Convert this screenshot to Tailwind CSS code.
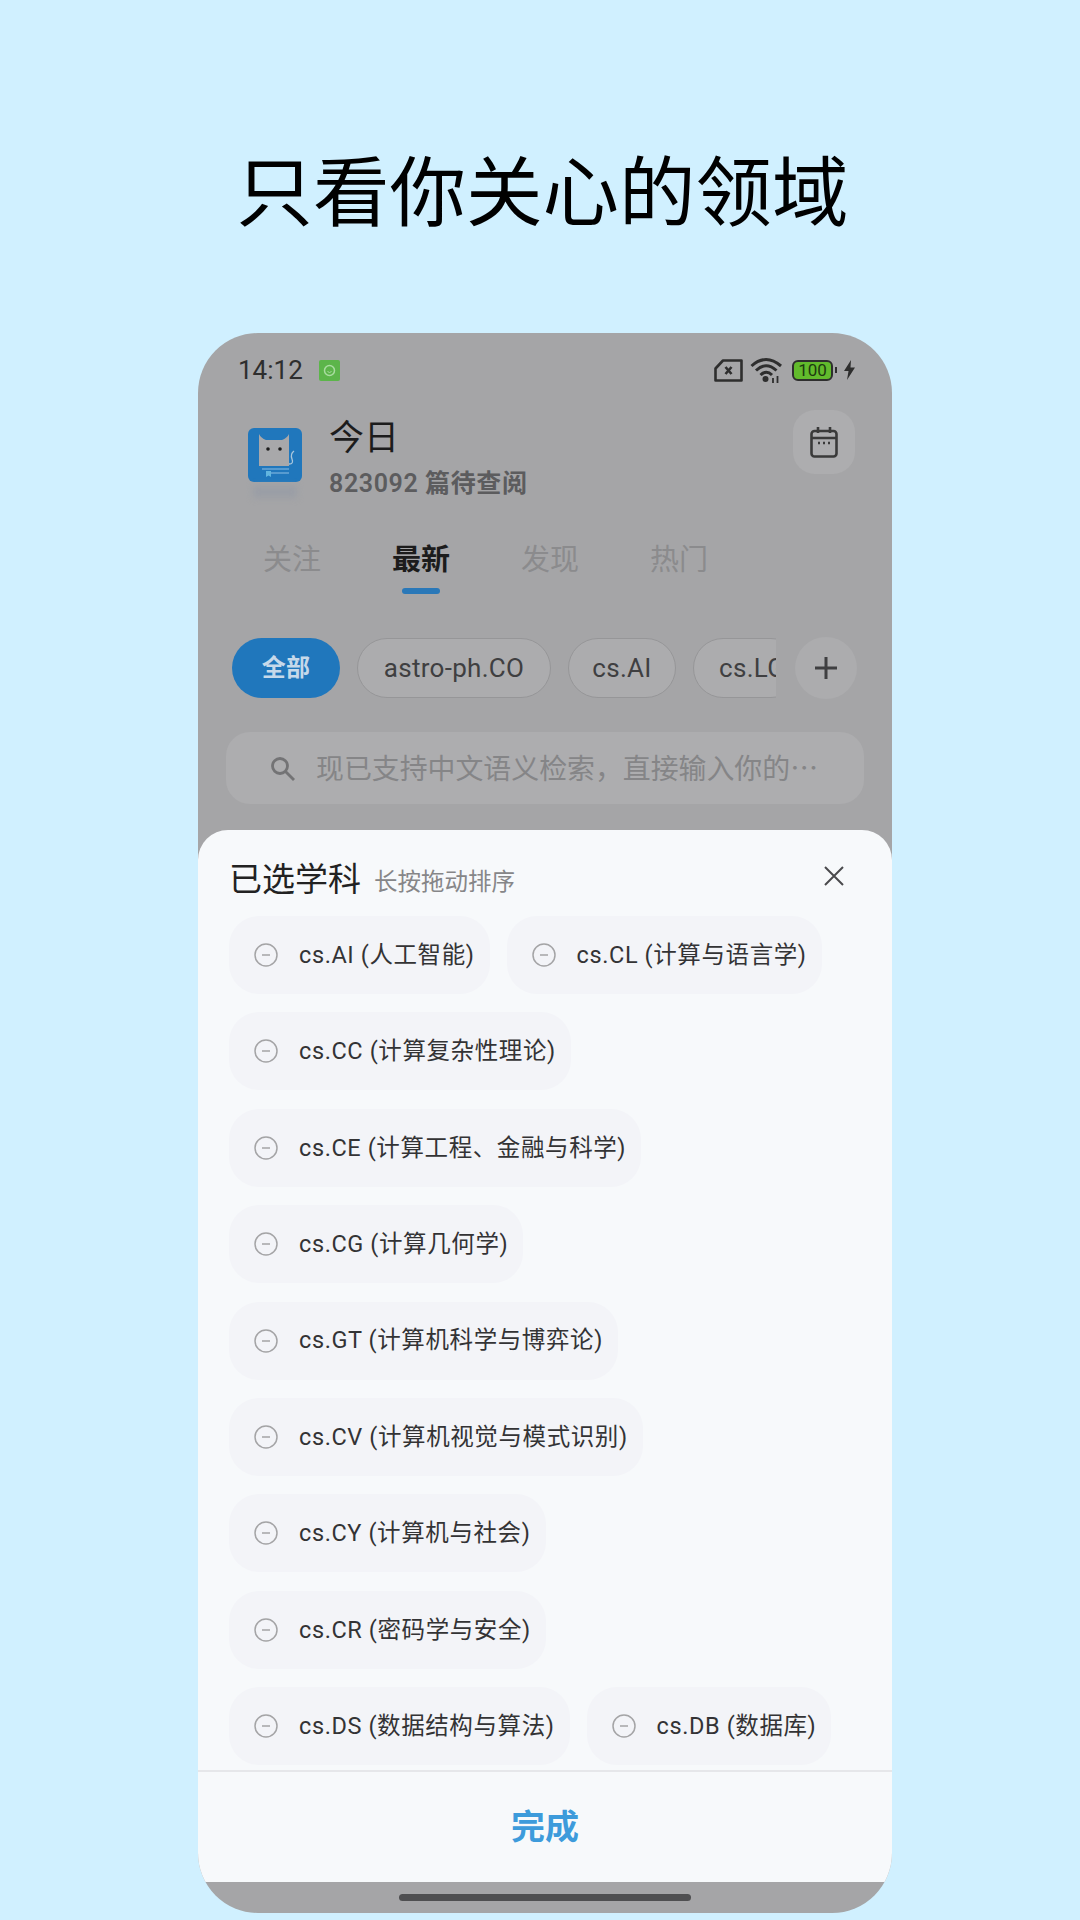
<!DOCTYPE html>
<html lang="zh-CN">
  <head>
    <meta charset="UTF-8" />
    <meta name="viewport" content="width=device-width, initial-scale=1.0" />
    <title>只看你关心的领域</title>
    <script src="https://cdn.jsdelivr.net/npm/@tailwindcss/browser@4"></script>
  </head>
  <body class="w-[1080px] h-[1920px] overflow-hidden bg-[#d0f0ff] font-[Roboto,'Noto_Sans_CJK_SC',sans-serif]">
    <!-- headline -->
    <h1 class="h-[333px] pt-[138px] pl-[5px] text-center text-[76.500px] leading-[112px] text-black font-normal">只看你关心的领域</h1>

    <!-- phone -->
    <section class="w-[694px] h-[1580px] ml-[198px] rounded-[60px] overflow-hidden bg-[#a5a5a7] flex flex-col">
      <!-- status bar -->
      <div class="h-[74px] pl-[40px] pr-[37px] flex items-center justify-between">
        <div class="flex items-center gap-[16px]">
          <span class="text-[26px] text-[#2e2e2e]">14:12</span>
          <svg class="w-[21px] h-[21px]" viewBox="0 0 21 21">
            <rect width="21" height="21" rx="2" fill="#5cb54a" />
            <circle cx="10.500" cy="10.500" r="5" fill="none" stroke="#a9dca0" stroke-width="1.500" />
            <path d="M8.500 11.500q2 2 4 0" fill="none" stroke="#a9dca0" stroke-width="1" />
          </svg>
        </div>
        <div class="flex items-center gap-[7px]">
          <svg class="w-[29px] h-[23px]" viewBox="0 0 29 23">
            <path d="M9 1.500H27.500V21.500H1.500V9.500Z" fill="none" stroke="#2e2e2e" stroke-width="2.600" stroke-linejoin="round" />
            <path d="M11.500 8l6 7M17.500 8l-6 7" stroke="#2e2e2e" stroke-width="2.600" />
          </svg>
          <svg class="w-[33px] h-[26px]" viewBox="0 0 33 26">
            <path d="M1.500 9Q16-4 31 9M6 13.500Q16 4 26.500 13.500M10.500 18Q16.500 12.500 22 18" fill="none" stroke="#2e2e2e" stroke-width="3" />
            <circle cx="15.500" cy="22" r="3" fill="#2e2e2e" />
            <path d="M23 21v5M27.500 19v7" stroke="#2e2e2e" stroke-width="1.800" />
          </svg>
          <div class="ml-[2px] w-[41px] h-[21px] rounded-[6px] border-2 border-[#2e2e2e] bg-[#62bb2c] flex items-center justify-center text-[17px] leading-none text-[#1d3a10]">100</div>
          <span class="w-[2px] h-[6px] -ml-[5px] bg-[#2e2e2e]"></span>
          <svg class="w-[11px] h-[20px]" viewBox="0 0 11 20">
            <path d="M7 0L0 11H4.500L3 20L11 7.500H6.500Z" fill="#2e2e2e" />
          </svg>
        </div>
      </div>

      <!-- header -->
      <div class="h-[100px] pr-[37px] flex items-start">
        <div class="relative mt-[21px] ml-[50px] w-[54px] h-[54px]">
          <svg class="w-[54px] h-[54px]" viewBox="0 0 54 54">
            <rect width="54" height="54" rx="6" fill="#2077bc" />
            <path d="M11 6Q13 10 18 12H34Q39 10 41 6V38H11Z" fill="#a8a8aa" />
            <circle cx="20" cy="21" r="1.800" fill="#1c1c1c" />
            <circle cx="32" cy="21" r="1.800" fill="#1c1c1c" />
            <path d="M41 36q5 0 3-5t2-8" fill="none" stroke="#a8c6dc" stroke-width="1.300" />
            <path d="M14 41H41M18 45H41" stroke="#8dc0e4" stroke-width="1.200" />
            <path d="M18 43h5v6l-2.500-1.500L18 49Z" fill="#62b5df" />
          </svg>
          <div class="absolute left-[5px] top-[58px] w-[44px] h-[12px] bg-[#9a9ea6] blur-[3px]"></div>
        </div>
        <div class="ml-[27px] flex flex-col">
          <span class="text-[35px] leading-[50px] mt-[7px] text-[#1c1c1c]">今日</span>
          <span class="text-[25px] leading-[32px] mt-[4px] font-semibold tracking-[0.6px] text-[#5c5c5e] whitespace-nowrap">823092 篇待查阅</span>
        </div>
        <button class="ml-auto mt-[3px] w-[62px] h-[64px] rounded-[22px] bg-[#adadaf] flex items-center justify-center">
          <svg class="w-[28px] h-[31px]" viewBox="0 0 28 31">
            <rect x="1.500" y="4" width="25" height="25.500" rx="3" fill="none" stroke="#3a3a3a" stroke-width="2.600" />
            <path d="M2 11H26M8 0v6M20 0v6" stroke="#3a3a3a" stroke-width="2.600" />
            <path d="M8 16h2M13 16h2M18 16h2" stroke="#3a3a3a" stroke-width="2.400" />
          </svg>
        </button>
      </div>

      <!-- tabs -->
      <div class="mt-[19px] h-[67px] pl-[65px] flex gap-[71px] text-[29px] leading-[68px] text-[#8b8b8d]">
        <span>关注</span>
        <span class="relative font-bold text-[#1c1c1c]">最新
          <span class="absolute left-[10px] top-[62px] w-[38px] h-[6px] rounded-full bg-[#2a78b8]"></span>
        </span>
        <span>发现</span>
        <span>热门</span>
      </div>

      <!-- filter chips -->
      <div class="mt-[45px] h-[60px] pl-[34px] flex items-center">
        <div class="w-[544px] overflow-hidden flex gap-[17px] text-[26px] tracking-[0.3px] text-[#3f3f41]">
          <span class="shrink-0 w-[108px] h-[60px] rounded-[30px] bg-[#2077bc] flex items-center justify-center text-[24px] font-semibold text-[#c6d9ea]">全部</span>
          <span class="shrink-0 w-[194px] h-[60px] rounded-[30px] border border-[#969698] bg-[#acacae] flex items-center justify-center">astro-ph.CO</span>
          <span class="shrink-0 w-[108px] h-[60px] rounded-[30px] border border-[#969698] bg-[#acacae] flex items-center justify-center">cs.AI</span>
          <span class="shrink-0 w-[108px] h-[60px] pl-[25px] rounded-[30px] border border-[#969698] bg-[#acacae] flex items-center">cs.LG</span>
        </div>
        <span class="ml-[19px] w-[62px] h-[62px] rounded-full bg-[#acacae] flex items-center justify-center">
          <svg class="w-[24px] h-[24px]" viewBox="0 0 24 24">
            <path d="M12 1V23M1 12H23" stroke="#3f3f41" stroke-width="3" />
          </svg>
        </span>
      </div>

      <!-- search -->
      <div class="mt-[34px] ml-[28px] w-[638px] h-[72px] rounded-[24px] bg-[#adadaf] flex items-center pl-[44px] gap-[21px]">
        <svg class="w-[25px] h-[25px]" viewBox="0 0 25 25">
          <circle cx="10" cy="10" r="7.500" fill="none" stroke="#737375" stroke-width="2.800" />
          <path d="M15.500 15.500L24 24" stroke="#737375" stroke-width="2.800" />
        </svg>
        <span class="font-['Noto_Sans_CJK_SC',sans-serif] text-[27.900px] text-[#858587] whitespace-nowrap">现已支持中文语义检索，直接输入你的…</span>
      </div>

      <!-- bottom sheet -->
      <div class="mt-[26px] h-[1052px] rounded-t-[30px] bg-[#f7f9fb] flex flex-col">
        <div class="h-[86px] pt-[13px] pl-[31px] pr-[48px] flex items-center">
          <span class="text-[33px] text-[#222]">已选学科</span>
          <span class="ml-[13px] mt-[7px] text-[23.500px] text-[#868688]">长按拖动排序</span>
          <svg class="ml-auto -mt-[7px] w-[20px] h-[20px]" viewBox="0 0 20 20">
            <path d="M1 1L19 19M19 1L1 19" stroke="#4a4a4c" stroke-width="2" />
          </svg>
        </div>

        <div class="w-[630px] h-[854px] ml-[31px] flex flex-wrap content-start gap-x-[17px] gap-y-[18.400px] text-[23.500px] tracking-[0.6px] text-[#333335]">
          <div class="h-[78px] pl-[25px] pr-[15px] rounded-[30px] bg-[#f3f4f8] flex items-center gap-[21px]">
            <svg class="w-[24px] h-[24px]" viewBox="0 0 24 24"><circle cx="12" cy="12" r="11" fill="none" stroke="#a4a4a6" stroke-width="1.500" /><path d="M8 12H16" stroke="#a4a4a6" stroke-width="1.500" /></svg>
            <span class="pt-[1px]">cs.AI (人工智能)</span>
          </div>
          <div class="h-[78px] pl-[25px] pr-[15px] rounded-[30px] bg-[#f3f4f8] flex items-center gap-[21px]">
            <svg class="w-[24px] h-[24px]" viewBox="0 0 24 24"><circle cx="12" cy="12" r="11" fill="none" stroke="#a4a4a6" stroke-width="1.500" /><path d="M8 12H16" stroke="#a4a4a6" stroke-width="1.500" /></svg>
            <span class="pt-[1px]">cs.CL (计算与语言学)</span>
          </div>
          <div class="h-[78px] pl-[25px] pr-[15px] rounded-[30px] bg-[#f3f4f8] flex items-center gap-[21px]">
            <svg class="w-[24px] h-[24px]" viewBox="0 0 24 24"><circle cx="12" cy="12" r="11" fill="none" stroke="#a4a4a6" stroke-width="1.500" /><path d="M8 12H16" stroke="#a4a4a6" stroke-width="1.500" /></svg>
            <span class="pt-[1px]">cs.CC (计算复杂性理论)</span>
          </div>
          <div class="h-[78px] pl-[25px] pr-[15px] rounded-[30px] bg-[#f3f4f8] flex items-center gap-[21px]">
            <svg class="w-[24px] h-[24px]" viewBox="0 0 24 24"><circle cx="12" cy="12" r="11" fill="none" stroke="#a4a4a6" stroke-width="1.500" /><path d="M8 12H16" stroke="#a4a4a6" stroke-width="1.500" /></svg>
            <span class="pt-[1px]">cs.CE (计算工程、金融与科学)</span>
          </div>
          <div class="h-[78px] pl-[25px] pr-[15px] rounded-[30px] bg-[#f3f4f8] flex items-center gap-[21px]">
            <svg class="w-[24px] h-[24px]" viewBox="0 0 24 24"><circle cx="12" cy="12" r="11" fill="none" stroke="#a4a4a6" stroke-width="1.500" /><path d="M8 12H16" stroke="#a4a4a6" stroke-width="1.500" /></svg>
            <span class="pt-[1px]">cs.CG (计算几何学)</span>
          </div>
          <div class="h-[78px] pl-[25px] pr-[15px] rounded-[30px] bg-[#f3f4f8] flex items-center gap-[21px]">
            <svg class="w-[24px] h-[24px]" viewBox="0 0 24 24"><circle cx="12" cy="12" r="11" fill="none" stroke="#a4a4a6" stroke-width="1.500" /><path d="M8 12H16" stroke="#a4a4a6" stroke-width="1.500" /></svg>
            <span class="pt-[1px]">cs.GT (计算机科学与博弈论)</span>
          </div>
          <div class="h-[78px] pl-[25px] pr-[15px] rounded-[30px] bg-[#f3f4f8] flex items-center gap-[21px]">
            <svg class="w-[24px] h-[24px]" viewBox="0 0 24 24"><circle cx="12" cy="12" r="11" fill="none" stroke="#a4a4a6" stroke-width="1.500" /><path d="M8 12H16" stroke="#a4a4a6" stroke-width="1.500" /></svg>
            <span class="pt-[1px]">cs.CV (计算机视觉与模式识别)</span>
          </div>
          <div class="h-[78px] pl-[25px] pr-[15px] rounded-[30px] bg-[#f3f4f8] flex items-center gap-[21px]">
            <svg class="w-[24px] h-[24px]" viewBox="0 0 24 24"><circle cx="12" cy="12" r="11" fill="none" stroke="#a4a4a6" stroke-width="1.500" /><path d="M8 12H16" stroke="#a4a4a6" stroke-width="1.500" /></svg>
            <span class="pt-[1px]">cs.CY (计算机与社会)</span>
          </div>
          <div class="h-[78px] pl-[25px] pr-[15px] rounded-[30px] bg-[#f3f4f8] flex items-center gap-[21px]">
            <svg class="w-[24px] h-[24px]" viewBox="0 0 24 24"><circle cx="12" cy="12" r="11" fill="none" stroke="#a4a4a6" stroke-width="1.500" /><path d="M8 12H16" stroke="#a4a4a6" stroke-width="1.500" /></svg>
            <span class="pt-[1px]">cs.CR (密码学与安全)</span>
          </div>
          <div class="h-[78px] pl-[25px] pr-[15px] rounded-[30px] bg-[#f3f4f8] flex items-center gap-[21px]">
            <svg class="w-[24px] h-[24px]" viewBox="0 0 24 24"><circle cx="12" cy="12" r="11" fill="none" stroke="#a4a4a6" stroke-width="1.500" /><path d="M8 12H16" stroke="#a4a4a6" stroke-width="1.500" /></svg>
            <span class="pt-[1px]">cs.DS (数据结构与算法)</span>
          </div>
          <div class="h-[78px] pl-[25px] pr-[15px] rounded-[30px] bg-[#f3f4f8] flex items-center gap-[21px]">
            <svg class="w-[24px] h-[24px]" viewBox="0 0 24 24"><circle cx="12" cy="12" r="11" fill="none" stroke="#a4a4a6" stroke-width="1.500" /><path d="M8 12H16" stroke="#a4a4a6" stroke-width="1.500" /></svg>
            <span class="pt-[1px]">cs.DB (数据库)</span>
          </div>
        </div>

        <div class="h-[112px] border-t-2 border-[#e6e7ea] flex items-center justify-center text-[34px] font-bold text-[#3d9bdb]">完成</div>
      </div>

      <!-- home indicator -->
      <div class="flex-1 flex items-center justify-center">
        <span class="w-[292px] h-[7px] rounded-full bg-[#4f4f51]"></span>
      </div>
    </section>
  </body>
</html>
